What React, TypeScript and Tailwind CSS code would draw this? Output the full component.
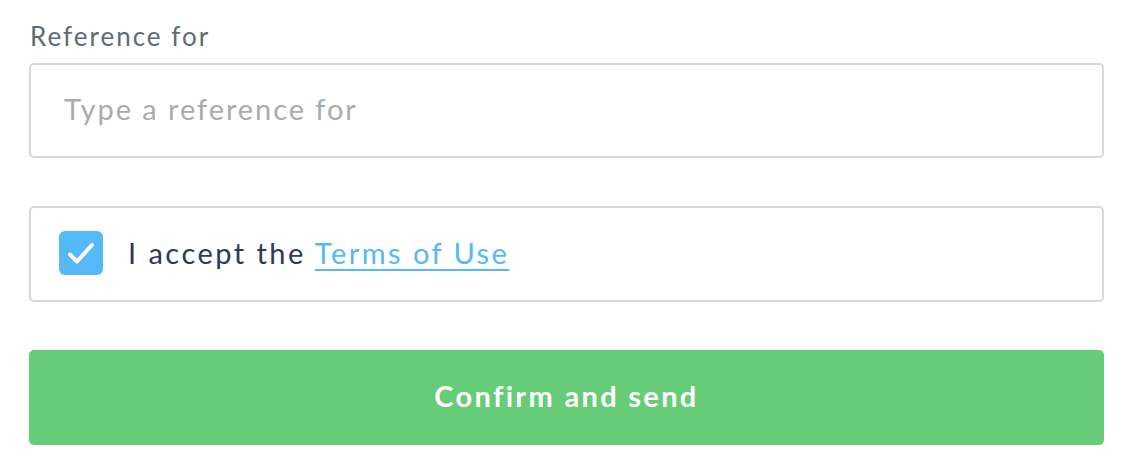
import React from "react";

export default function App() {
  return (
    <div className="w-[1140px] h-[468px] bg-white pl-[29px] pr-[36px] pt-[20px] font-['Lato','Noto_Sans',sans-serif]">
      <label className="block text-[26px] leading-[32px] tracking-[0.077em] text-[#5d6b73] pl-px">Reference for</label>
      <div className="mt-[11px] h-[95px] rounded-[5px] border-2 border-[#d8d8da] flex items-center px-[33px] pb-[3px]">
        <span className="text-[29px] tracking-[0.067em] text-[#a9acae]">Type a reference for</span>
      </div>
      <div className="mt-[48px] h-[96px] rounded-[5px] border-2 border-[#d8d8da] flex items-center pl-[28px] pb-[2px]">
        <div className="w-[44px] h-[44px] rounded-[6px] bg-[#56b9f7] shrink-0">
          <svg width="44" height="44" viewBox="0 0 44 44" fill="none">
            <path d="M11 23.5l7 7L33 14" stroke="white" strokeWidth="4" strokeLinecap="round" strokeLinejoin="round" />
          </svg>
        </div>
        <span className="ml-[25px] text-[29px] tracking-[0.085em] text-[#2d3a58]">
          I accept the{" "}
          <a className="text-[#56b9f7] underline decoration-2 underline-offset-[5px]">Terms of Use</a>
        </span>
      </div>
      <button className="mt-[48px] w-full h-[95px] rounded-[5px] bg-[#66cc78] text-white text-[29px] tracking-[0.08em] font-bold flex items-center justify-center pb-[3px]">
        Confirm and send
      </button>
    </div>
  );
}
